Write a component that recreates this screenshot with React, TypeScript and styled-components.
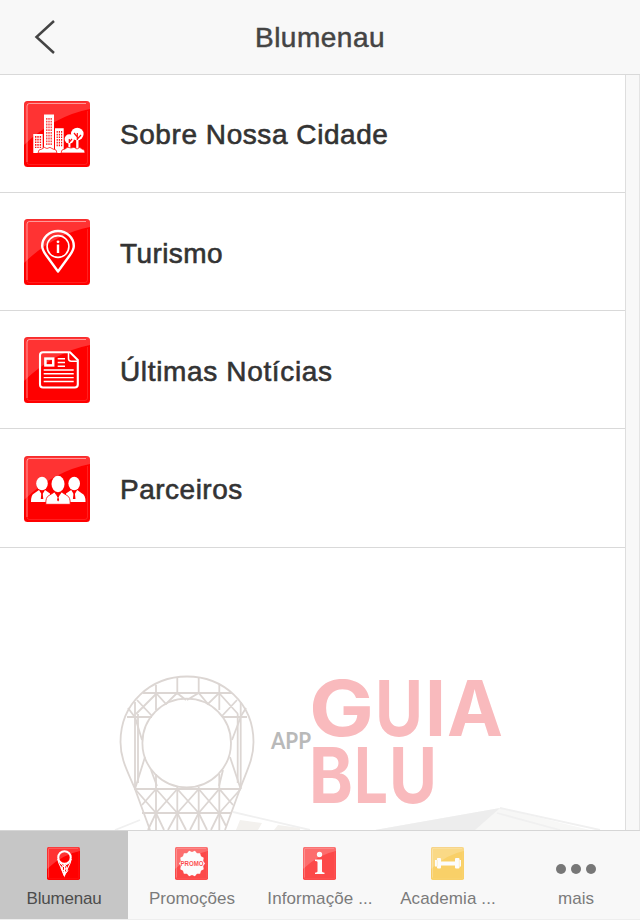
import React from "react";
import styled, {createGlobalStyle} from "styled-components";

const GlobalStyle = createGlobalStyle`
    body {
      margin: 0;
      background: #f8f8f8;
      font-family: "Liberation Sans", Arial, sans-serif;
    }
`;

const Screen = styled.div`
    display: flex;
    flex-direction: column;
    width: 640px;
    height: 920px;
    overflow: hidden;
    background: #f8f8f8;
`;

const Header = styled.header`
    display: grid;
    grid-template-columns: 90px 1fr 90px;
    align-items: center;
    box-sizing: border-box;
    height: 75px;
    border-bottom: 1px solid #d9d9d9;
`;

const BackButton = styled.button`
    display: flex;
    padding: 0 0 0 34px;
    border: 0;
    background: none;
`;

const Title = styled.h1`
    margin: 0;
    padding-top: 1px;
    color: #444;
    font-size: 28px;
    font-weight: 400;
    letter-spacing: 0.5px;
    line-height: 73px;
    text-align: center;
    -webkit-text-stroke: 0.5px #444;
`;

const Main = styled.main`
    display: flex;
    flex: 1;
    min-height: 0;
`;

const Content = styled.div`
    width: 625px;
    background: white;
`;

const SideStrip = styled.div`
    flex: 1;
    border-left: 1px solid #dedede;
    border-right: 1px solid #e4e4e4;
`;

const List = styled.ul`
    margin: 0;
    padding: 0;
    list-style: none;
`;

const RowLabel = styled.span<{ $spacing: number }>`
    color: #333;
    font-size: 28px;
    letter-spacing: ${props => props.$spacing}px;
    line-height: 70px;
    white-space: nowrap;
    -webkit-text-stroke: 0.6px #333;
`;

const Row = styled.li`
    display: flex;
    gap: 30px;
    box-sizing: border-box;
    height: 118px;
    padding: 26px 24px 0;
    border-bottom: 1px solid #d9d9d9;

    &:first-child ${RowLabel} {
      line-height: 68px;
    }

    &:last-child {
      height: 119px;
      padding-top: 27px;
    }

    &:last-child ${RowLabel} {
      line-height: 68px;
    }
`;

const Banner = styled.svg`
    display: block;
`;

const TabBar = styled.nav`
    display: grid;
    grid-template-columns: repeat(5, 128px);
    box-sizing: border-box;
    height: 90px;
    border-top: 1px solid #d6d6d6;
    border-bottom: 1px solid #eee;
`;

const Tab = styled.div<{ $active?: boolean }>`
    display: flex;
    flex-direction: column;
    align-items: center;
    gap: 9px;
    padding-top: 16px;
    background: ${props => props.$active ? '#c6c6c6' : 'transparent'};
    color: ${props => props.$active ? '#4c4c4c' : '#7b7b7b'};

    svg {
      margin-right: 1px;
      opacity: ${props => props.$active ? 1 : 0.7};
    }
`;

const TabLabel = styled.span<{ $spacing?: number }>`
    font-size: 17px;
    letter-spacing: ${props => props.$spacing || 0}px;
    line-height: 20px;
    white-space: nowrap;
`;

const Dots = styled.div`
    display: flex;
    align-items: center;
    justify-content: center;
    gap: 5px;
    height: 33px;
    padding-top: 5px;
    margin-bottom: -5px;

    i {
      width: 10px;
      height: 10px;
      border-radius: 50%;
      background: #777;
    }
`;

type TileProps = {
    size: number
    color?: string
    children: React.ReactNode
}

// Glossy square that every icon sits on, drawn on a 66 unit grid
const Tile: React.FunctionComponent<TileProps> = ({size, color = '#ff0000', children}) => (
    <svg width={size} height={size} viewBox="0 0 66 66" fill="none">
        <rect width="66" height="66" rx="3.5" fill={color}/>
        <path d="M0 3.5Q0 0 3.5 0H62.500Q66 0 66 3.5V8Q30 15 0 44Z" fill="white" fillOpacity="0.2"/>
        <path d="M3 61V5Q3 2.500 5.500 2.500H62" stroke="white" strokeOpacity="0.5" strokeWidth="1"/>
        <path d="M3 61Q3 63.500 5.500 63.500H61Q63.500 63.500 63.500 61V10" stroke="white" strokeOpacity="0.12" strokeWidth="1"/>
        <path d="M0.5 61V4Q0.5 0.5 4 0.5H62" stroke="#b00000" strokeOpacity="0.12"/>
        {children}
    </svg>
);

const CityIcon = () => (
    <Tile size={66}>
        <g fill="white">
            <path d="M9.3 33H18.7V52H9.3ZM20 13.5H30V52H20ZM31 27.3H39.7V52H31Z"/>
            <circle cx="53.3" cy="33" r="6.3"/>
            <circle cx="45.3" cy="38" r="4.7"/>
            <path d="M52.2 34H54.5V48H52.2ZM44.4 39H46.4V48H44.4Z"/>
        </g>
        <path d="M53.3 39V32M53.3 38L57 34M53.3 36L50 32M45.3 42V38M45.3 41L48 38" stroke="#ff1010" strokeWidth="1.2"/>
        <path d="M11.7 35V47M14 35V47M16.4 35V47" stroke="#ff1515" strokeWidth="1.4" strokeDasharray="1.7 1"/>
        <path d="M22.8 17V45M25 17V45M27.2 17V45" stroke="#ff2020" strokeWidth="1.2" strokeDasharray="1.8 1"/>
        <path d="M33.2 30V46M35.4 30V46M37.6 30V46" stroke="#ff1515" strokeWidth="1.2" strokeDasharray="1.7 1"/>
        <path
            d="M14 52Q14 48 18 48Q20 45 23 47.5Q26 45 29 48Q33 48 33 52ZM37 52Q37 48 41 48Q43 45 47 47Q50 45 53 48Q56 45 58 48Q61 48 61 52Z"
            fill="white" stroke="#ff0000" strokeWidth="0.7"
        />
    </Tile>
);

const TourismIcon = () => (
    <Tile size={66}>
        <path d="M34 52.5L22 36C19.5 32.5 18.2 30 18.2 27A15.8 15 0 0 1 49.8 27C49.8 30 48.5 32.5 46 36Z" stroke="white" strokeWidth="2.4" strokeLinejoin="round"/>
        <circle cx="34" cy="27.5" r="10.9" stroke="white" strokeWidth="1.6"/>
        <path d="M34 25.500V34" stroke="white" strokeWidth="2.4"/>
        <circle cx="34" cy="22.8" r="1.4" fill="white"/>
    </Tile>
);

const NewsIcon = () => (
    <Tile size={66}>
        <path
            d="M19 15.3H46L53.8 23V47.5Q53.8 50.5 50.8 50.5H19Q16 50.5 16 47.5V18.3Q16 15.3 19 15.3Z"
            stroke="white" strokeWidth="2.1" strokeLinejoin="round"
        />
        <path d="M44.5 16V21.5Q44.5 24.2 47.2 24.2H53.5" stroke="white" strokeWidth="1.5"/>
        <rect x="21.4" y="21.6" width="7.8" height="6.8" stroke="white" strokeWidth="2.5"/>
        <path
            d="M33.7 21.8H41M33.7 25.5H41M33.7 29.2H41M19.7 33H49.7M19.7 36.8H49.7M19.7 40.6H49.7M19.7 44.5H49.7"
            stroke="white" strokeWidth="1.4"
        />
    </Tile>
);

const PartnersIcon = () => (
    <Tile size={66}>
        <g fill="white">
            <ellipse cx="18" cy="27.5" rx="5.8" ry="6.8"/>
            <ellipse cx="50.200" cy="27.5" rx="5.8" ry="6.8"/>
            <path d="M7 46Q7 38.500 10 37.500L15 34L18 39L21 34L26 37.500V46ZM42 46V37.500L47.2 34L50.2 39L53.2 34L58 37.500Q61.5 38.500 61.5 46Z"/>
        </g>
        <path d="M17.3 37.500H18.7L19.3 43H16.8ZM49.500 37.500H50.900L51.5 43H48.9Z" fill="#ff0000"/>
        <path d="M21.8 48.3Q21.5 41 25 39.5L30.5 36L34 41L37.5 36L43 39.5Q46.500 41 46.2 48.3Z" fill="white" stroke="#ff0000" strokeWidth="0.8"/>
        <path d="M33.2 39.5H34.8L34.5 41.5L35.2 44L34.1 45.5L33 44L33.6 41.5Z" fill="#ff0000"/>
        <ellipse cx="34" cy="28" rx="6.5" ry="8.3" fill="white"/>
    </Tile>
);

const TowerIcon = () => (
    <Tile size={33}>
        <circle cx="35" cy="21" r="12.5" stroke="white" strokeWidth="4"/>
        <path d="M21.5 24C23 36 31 43 35 57C39 43 47 36 48.500 24" stroke="white" strokeWidth="2.2"/>
        <path d="M26 32L42 47L34 57L28 42L44 32M35 34L40 42L32 48L30 39L35 34V55" stroke="white" strokeWidth="2"/>
    </Tile>
);

const badge = Array.from({length: 28}, (_, i) => {
    const r = i % 2 ? 23 : 26;
    const a = i * Math.PI / 14;
    return `${34 + r * Math.cos(a)},${33 + r * Math.sin(a)}`;
}).join(' ');

const PromoIcon = () => (
    <Tile size={33}>
        <polygon points={badge} fill="white"/>
        <text
            x="11" y="38.5" fill="#ff0000" fontFamily="Liberation Sans, sans-serif" fontSize="16"
            fontWeight="700" textLength="46" lengthAdjust="spacingAndGlyphs"
        >PROMO</text>
    </Tile>
);

const InfoIcon = () => (
    <Tile size={33}>
        <circle cx="33" cy="15" r="5.3" fill="white"/>
        <path d="M24 25H38V49Q38 51 43 51.5V54H24V51.5Q29 51 29 49V30Q29 28 24 28Z" fill="white"/>
    </Tile>
);

const GymIcon = () => (
    <Tile size={33} color="#fac02c">
        <path
            d="M8 26H12V23Q12 22 14 22H18Q20 22 20 24V29H48V24Q48 22 50 22H55Q57 22 57 24V26H60V39H57V41Q57 43 55 43H50Q48 43 48 41V37H20V41Q20 43 18 43H14Q12 43 12 41V39H8Z"
            fill="white"
        />
        <path d="M12.5 26V39M56.5 26V39" stroke="#fbd271" strokeWidth="1"/>
    </Tile>
);

const logoLetters = [
    {char: 'G', x: 309, y: 736, width: 65},
    {char: 'U', x: 375, y: 736, width: 48},
    {char: 'I', x: 425, y: 736, width: 21},
    {char: 'A', x: 447, y: 736, width: 56},
    {char: 'B', x: 309, y: 802.5, width: 44},
    {char: 'L', x: 354, y: 802.5, width: 34},
    {char: 'U', x: 389, y: 802.5, width: 48},
];

// The viewBox keeps screen coordinates, the banner starts right below the list
const GuideBanner = () => (
    <Banner width="625" height="282" viewBox="0 548 625 282" fill="none">
        <path d="M375 830L500 808L590 830Z" fill="#f7f7f6"/>
        <path d="M375 830L500 808L475 830Z" fill="#ededed"/>
        <path d="M140 820L115 830M233 812L310 830M500 808L600 830M497 813L560 830" stroke="#f0f0f0" strokeWidth="1.8"/>
        <path d="M240 820L262 823L258 830H236ZM278 825L300 828V830H274Z" fill="#f3f1ee"/>
        <g stroke="#dcd6d3" strokeWidth="1.8">
            <path d="M150 830L135 789C127 770 120.500 759 120.500 742C120.500 703 151 676.500 187 676.500C223 676.500 253.500 703 253.500 742C253.500 759 247 770 240 789L225 830"/>
            <circle cx="186.700" cy="743" r="44.300"/>
            <path d="M143 693H232M127 717H152M222 717H247M134 789H241M142 813H232"/>
            <path d="M156 685V710M177.300 677V693M198.700 677V693M219.300 685V710M135 702V789M138 714V783M240.700 702V789M237.700 714V783"/>
            <path d="M156 774V830M177.300 787V830M198.700 787V830M219.300 774V830"/>
            <path d="M135 717L142 740M240.700 717L232 740M135 789L145 757M240.700 789L230 757M151 770L157 786M223 770L219 786"/>
            <path d="M137 700L152 716M156 694L136 714M128 708L134 716M156 693L166 704L177 693L186 700M187 700L198.700 693L208 704L219 693L238 714M237 700L222 716M246 708L241 716"/>
            <path d="M135 789L156 813L177.300 789L198.700 813L219.300 789L233 805M142 805L156 789L177.300 813L198.700 789L219.300 813L240.700 789"/>
            <path d="M156 813L148 830M156 813L164 830M177.300 813L168 830M177.300 813L186 830M198.700 813L190 830M198.700 813L207 830M219.300 813L211 830M219.300 813L226 826"/>
        </g>
        <g fontFamily="Lato, sans-serif">
            <text x="271" y="748.500" fontSize="22.500" fontWeight="700" fill="#b9b9b9" textLength="40" lengthAdjust="spacingAndGlyphs">APP</text>
        </g>
        <g fontFamily="Inter, sans-serif" fontSize="77" fontWeight="700" fill="#f9babd">
            {logoLetters.map((letter, index) => (
                <text
                    key={index} x={letter.x} y={letter.y}
                    textLength={letter.width} lengthAdjust="spacingAndGlyphs"
                >{letter.char}</text>
            ))}
        </g>
    </Banner>
);

const rows = [
    {label: 'Sobre Nossa Cidade', icon: <CityIcon/>, spacing: 0.56},
    {label: 'Turismo', icon: <TourismIcon/>, spacing: 0.4},
    {label: 'Últimas Notícias', icon: <NewsIcon/>, spacing: 0.65},
    {label: 'Parceiros', icon: <PartnersIcon/>, spacing: 0.5},
];

const tabs = [
    {label: 'Blumenau', icon: <TowerIcon/>, active: true, spacing: -0.2},
    {label: 'Promoções', icon: <PromoIcon/>},
    {label: 'Informaçõe ...', icon: <InfoIcon/>, spacing: 0.1},
    {label: 'Academia ...', icon: <GymIcon/>, spacing: 0.1},
    {label: 'mais', icon: <Dots><i/><i/><i/></Dots>},
];

const App: React.FunctionComponent = () => (
    <Screen>
        <GlobalStyle/>
        <Header>
            <BackButton aria-label="Voltar">
                <svg width="22" height="34" viewBox="0 0 22 34" fill="none">
                    <path d="M20 1L2.500 17L20 33" stroke="#444" strokeWidth="2.500"/>
                </svg>
            </BackButton>
            <Title>Blumenau</Title>
        </Header>
        <Main>
            <Content>
                <List>
                    {rows.map(row => (
                        <Row key={row.label}>
                            {row.icon}
                            <RowLabel $spacing={row.spacing}>{row.label}</RowLabel>
                        </Row>
                    ))}
                </List>
                <GuideBanner/>
            </Content>
            <SideStrip/>
        </Main>
        <TabBar>
            {tabs.map(tab => (
                <Tab key={tab.label} $active={tab.active}>
                    {tab.icon}
                    <TabLabel $spacing={tab.spacing}>{tab.label}</TabLabel>
                </Tab>
            ))}
        </TabBar>
    </Screen>
);

export default App;
